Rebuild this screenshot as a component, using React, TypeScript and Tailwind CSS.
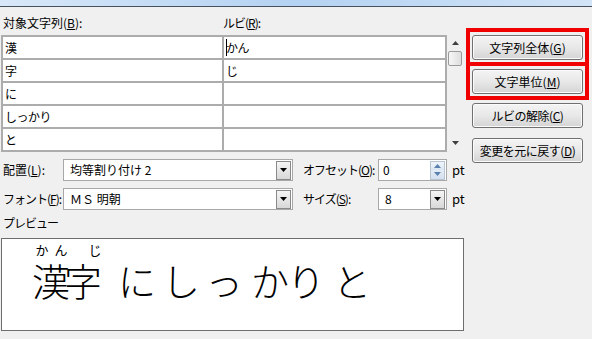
import React from 'react';

const ui = { fontFamily: '"Noto Sans CJK JP", "Noto Sans", sans-serif' };

function Btn({ label, k }: { label: string; k: string }) {
  return (
    <div className="flex h-[25px] w-[111px] items-center justify-center rounded-[3px] border border-[#707070] bg-gradient-to-b from-[#f4f4f4] via-[#e8e8e8] to-[#d4d4d4] text-[12px] text-black shadow-[inset_0_0_0_1px_#fbfbfb]">
      {label}(<span className="underline">{k}</span>)
    </div>
  );
}

function Arrow() {
  return (
    <div className="flex h-[19px] w-[15px] items-center justify-center border border-[#8a8a8a] bg-gradient-to-b from-[#f5f5f5] to-[#d8d8d8]">
      <svg width="7" height="4" viewBox="0 0 7 4"><path d="M0 0h7L3.5 4z" fill="#000" /></svg>
    </div>
  );
}

function Select({ value, w }: { value: string; w: string }) {
  return (
    <div className={`flex h-[22px] ${w} shrink-0 items-center justify-between border border-[#a8a8a8] bg-white pl-[6px] pr-[1px] text-[12px]`}>
      <span className="whitespace-nowrap">{value}</span>
      <Arrow />
    </div>
  );
}

function Spin() {
  return (
    <div className="flex h-[19px] w-[15px] flex-col border border-[#b8c4d2]">
      <div className="flex flex-1 items-center justify-center bg-gradient-to-b from-[#f0f5fa] to-[#dbe6f2]">
        <svg width="7" height="4" viewBox="0 0 7 4"><path d="M0 4h7L3.5 0z" fill="#5b7fae" /></svg>
      </div>
      <div className="flex flex-1 items-center justify-center bg-gradient-to-b from-[#e4edf6] to-[#d3e0ee]">
        <svg width="7" height="4" viewBox="0 0 7 4"><path d="M0 0h7L3.5 4z" fill="#5b7fae" /></svg>
      </div>
    </div>
  );
}

const rows = [
  ['漢', 'かん'],
  ['字', 'じ'],
  ['に', ''],
  ['しっかり', ''],
  ['と', ''],
];

export default function App() {
  return (
    <div className="h-[339px] w-[592px] overflow-hidden bg-[#f0f0f0] text-black" style={ui}>
      <div className="h-[6px] bg-gradient-to-r from-[#d8e8f8] via-[#b4d2f2] to-[#d2e4f6]" />
      <div className="h-px bg-[#46515f]" />
      <div className="flex">
        {/* left column */}
        <div className="w-[466px] pl-px">
          <div className="mt-[8px] flex h-[16px] text-[12px] leading-[16px]">
            <div className="w-[222px] pl-[2px]">
              対象文字列(<span className="underline">B</span>):
            </div>
            <div className="tracking-[-1px]">
              ルビ(<span className="underline">R</span>):
            </div>
          </div>
          <div className="mt-[4px] flex">
            <div className="grid w-[446px] grid-cols-[219px_221px] gap-[2px] bg-[#acacac] p-[2px]">
              {rows.map(([a, b], i) => (
                <React.Fragment key={i}>
                  <div className="flex h-[21px] items-center bg-white pl-[2px] text-[12px] tracking-[-0.5px]">{a}</div>
                  <div className="flex h-[21px] items-center bg-white pl-[2px] text-[12px] tracking-[-0.5px]">
                    {i === 0 && <span className="mr-[-1px] h-[17px] w-px bg-black" />}
                    {b}
                  </div>
                </React.Fragment>
              ))}
            </div>
            <div className="flex w-[16px] flex-col items-center bg-[#f0f0f0]">
              <svg className="mt-[6px]" width="7" height="4" viewBox="0 0 7 4"><path d="M0 4h7L3.5 0z" fill="#404040" /></svg>
              <div className="mt-[6px] h-[15px] w-[14px] rounded-[2px] border border-[#9a9a9a] bg-gradient-to-r from-[#f6f6f6] to-[#dedede]" />
              <div className="flex-1" />
              <svg className="mb-[7px]" width="7" height="4" viewBox="0 0 7 4"><path d="M0 0h7L3.5 4z" fill="#404040" /></svg>
            </div>
          </div>

          <div className="mt-[7px] flex items-center whitespace-nowrap text-[12px]">
            <div className="w-[62px] shrink-0 pl-[2px]">
              配置(<span className="underline">L</span>):
            </div>
            <Select value="均等割り付け 2" w="w-[230px]" />
            <div className="ml-[10px] w-[75px] shrink-0 tracking-[-1px]">
              オフセット(<span className="underline">O</span>):
            </div>
            <div className="flex h-[22px] w-[69px] shrink-0 items-center justify-between border border-[#a8a8a8] bg-white pl-[4px] pr-[1px]">
              <span>0</span>
              <Spin />
            </div>
            <span className="ml-[5px] text-[13px]">pt</span>
          </div>

          <div className="mt-[7px] flex items-center whitespace-nowrap text-[12px]">
            <div className="w-[62px] shrink-0 pl-[2px] tracking-[-1px]">
              フォント(<span className="underline">F</span>):
            </div>
            <Select value="ＭＳ 明朝" w="w-[230px]" />
            <div className="ml-[10px] w-[75px] shrink-0 tracking-[-1px]">
              サイズ(<span className="underline">S</span>):
            </div>
            <Select value="8" w="w-[69px]" />
            <span className="ml-[5px] text-[13px]">pt</span>
          </div>

          <div className="mt-[5px] h-[16px] pl-[2px] text-[12px] leading-[16px] tracking-[-1px]">プレビュー</div>

          <div className="mt-[7px] h-[93px] w-[463px] border border-[#6e6e6e] bg-white pt-[4px]">
            <div className="flex h-[14px] text-[13px] leading-[14px]">
              <span className="ml-[33px] w-[14px] text-center">か</span>
              <span className="ml-[5px] w-[14px] text-center">ん</span>
              <span className="ml-[20px] w-[14px] text-center">じ</span>
            </div>
            <div className="mt-[4px] flex h-[38px] text-[38px] font-light leading-[38px]">
              <span className="ml-[30px] w-[36px] text-center">漢</span>
              <span className="-ml-[4px] w-[36px] text-center">字</span>
              <span className="ml-[18px] w-[36px] text-center">に</span>
              <span className="ml-[8px] w-[36px] text-center">し</span>
              <span className="ml-[7px] w-[36px] text-center">っ</span>
              <span className="ml-[10px] w-[36px] text-center">か</span>
              <span className="ml-0 w-[36px] text-center">り</span>
              <span className="ml-[10px] w-[36px] text-center">と</span>
            </div>
          </div>
        </div>

        {/* right column */}
        <div className="flex flex-col pt-[21px]">
          <div className="w-[123px] border-4 border-[#f00000] pl-[2px] pt-[3px] pb-[2px]">
            <Btn label="文字列全体" k="G" />
          </div>
          <div className="w-[123px] border-4 border-t-0 border-[#f00000] pl-[2px] pt-[3px] pb-[2px]">
            <Btn label="文字単位" k="M" />
          </div>
          <div className="ml-[6px] mt-[3px] tracking-[-0.5px]">
            <Btn label="ルビの解除" k="C" />
          </div>
          <div className="ml-[6px] mt-[10px] tracking-[-0.5px]">
            <Btn label="変更を元に戻す" k="D" />
          </div>
        </div>
      </div>
    </div>
  );
}
